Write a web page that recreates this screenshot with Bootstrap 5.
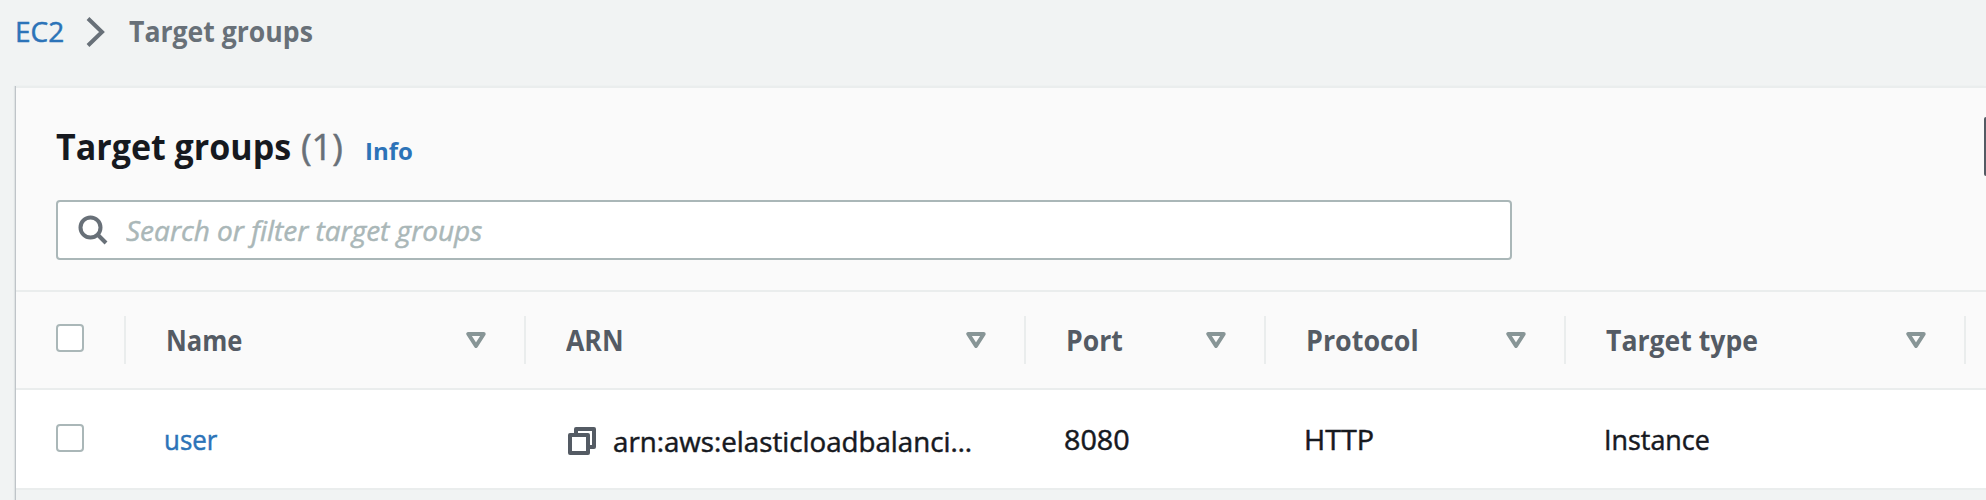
<!DOCTYPE html>
<html lang="en">
<head>
<meta charset="utf-8">
<title>Target groups</title>
<link href="https://cdn.jsdelivr.net/npm/bootstrap@5.3.0/dist/css/bootstrap.min.css" rel="stylesheet">
<style>
html, body { height: 500px; overflow: hidden; }
body { background: #f1f3f3; color: #16191f; font: 400 28px/38px "Open Sans", "Noto Sans", sans-serif; }
a { color: #2c73b8; text-decoration: none; }
svg { display: block; flex: none; }
.crumbs { height: 62px; padding-left: 15px; --bs-breadcrumb-margin-bottom: 0; }
.crumbs .current { color: #687078; font-weight: 700; margin-left: 23px; }
.crumbs .root { width: 49px; }
.crumbs svg { margin: 1px 0 0 22px; }
.panel { margin: 24px 0 0 16px; background: #fafafa; border-top: 2px solid #eaeded; box-shadow: -1px 0 0 #bfc4c8, -2px 0 1px #dfe3e4; }
.panel-head { height: 202px; padding: 29px 0 0 40px; }
.title-line { height: 58px; }
h1 { font-size: 36px; font-weight: 700; line-height: 60px; margin: 0; }
.counter { font-weight: 400; color: #687078; width: 45px; }
.info { font-size: 24px; font-weight: 700; margin-left: 19px; }
.action { width: 2px; height: 59px; margin-left: auto; border: 0; border-left: 2px solid #545b64; border-radius: 2px 0 0 2px; }
.search { width: 1456px; height: 60px; margin-top: 25px; padding-left: 20px; background: #fff; border: 2px solid #aab7b8; border-radius: 4px; }
.search input { width: 1200px; background: none; border: 0; outline: 0; padding: 0; margin-left: 18px; font-style: italic; line-height: 38px; }
.search input::placeholder { color: #aab7b8; opacity: 1; }
.root, .counter, .search input, .line-body { -webkit-text-stroke: .5px; }
.line { display: grid; grid-template-columns: 110px 400px 500px 240px 300px 400px minmax(0, 1fr); align-items: center; border-top: 2px solid #eaeded; }
.line-head { height: 98px; color: #545b64; font-weight: 700; }
.line-body { height: 100px; background: #fff; }
.line-end { border-top: 2px solid #eaeded; background: #f1f3f3; height: 20px; }
.line-head > div { height: 48px; border-right: 2px solid #eaeded; padding: 0 38px 0 40px; }
.line-head span { margin-top: -1px; }
.line-body > div { padding-left: 38px; }
.line > .pick { padding-left: 40px; }
.form-check-input.tick { width: 28px; height: 28px; margin: -4px 0 0; border: 2px solid #aab7b8; border-radius: 4px; background: #fff; }
.line-body .form-check-input.tick { margin-top: -2px; }
.copy { margin: 4px 0 0 4px; }
.arn { margin: 4px 0 0 17px; }
/* condensed letterforms */
.sq { display: inline-block; white-space: nowrap; transform: scaleX(var(--sq, .95)); transform-origin: 0 50%; }
.sq-90 { --sq: .912; } .sq-92 { --sq: .925; } .sq-96 { --sq: .96; } .sq-98 { --sq: .989; } .sq-103 { --sq: 1.025; } .sq-id { --sq: 1; }
.ttl { width: 245px; --sq: .945; }
</style>
</head>
<body>
<nav class="breadcrumb crumbs d-flex align-items-center">
  <a class="root sq sq-id" href="#">EC2</a>
  <svg width="20" height="32" viewBox="0 0 20 32" fill="none" stroke="#687078" stroke-width="4"><path d="M2 2.5 16 16 2 29.5"/></svg>
  <span class="current sq">Target groups</span>
</nav>
<main class="panel">
  <header class="panel-head">
    <div class="title-line d-flex align-items-baseline">
      <h1 class="d-flex"><span class="sq ttl">Target groups</span><span class="counter sq sq-id">(1)</span></h1>
      <a class="info" href="#">Info</a>
      <button class="btn p-0 action align-self-start" aria-label="Actions"></button>
    </div>
    <div class="search d-flex align-items-center">
      <svg width="30" height="30" viewBox="0 0 30 30" fill="none" stroke="#687078" stroke-width="4"><circle cx="12.5" cy="12.5" r="10"/><path d="m19.5 19.5 8.5 8.5"/></svg>
      <input type="text" placeholder="Search or filter target groups">
    </div>
  </header>
  <div class="line line-head">
    <div class="pick d-flex align-items-center"><input class="form-check-input tick" type="checkbox"></div>
    <div class="d-flex align-items-center justify-content-between"><span class="sq sq-90">Name</span><svg width="20" height="16" viewBox="0 0 20 16" fill="none" stroke="#879596" stroke-width="4" stroke-linejoin="round"><path d="M2.3 2h15.4L10 14Z"/></svg></div>
    <div class="d-flex align-items-center justify-content-between"><span class="sq">ARN</span><svg width="20" height="16" viewBox="0 0 20 16" fill="none" stroke="#879596" stroke-width="4" stroke-linejoin="round"><path d="M2.3 2h15.4L10 14Z"/></svg></div>
    <div class="d-flex align-items-center justify-content-between"><span class="sq">Port</span><svg width="20" height="16" viewBox="0 0 20 16" fill="none" stroke="#879596" stroke-width="4" stroke-linejoin="round"><path d="M2.3 2h15.4L10 14Z"/></svg></div>
    <div class="d-flex align-items-center justify-content-between"><span class="sq sq-96">Protocol</span><svg width="20" height="16" viewBox="0 0 20 16" fill="none" stroke="#879596" stroke-width="4" stroke-linejoin="round"><path d="M2.3 2h15.4L10 14Z"/></svg></div>
    <div class="d-flex align-items-center justify-content-between"><span class="sq">Target type</span><svg width="20" height="16" viewBox="0 0 20 16" fill="none" stroke="#879596" stroke-width="4" stroke-linejoin="round"><path d="M2.3 2h15.4L10 14Z"/></svg></div>
  </div>
  <div class="line line-body">
    <div class="pick d-flex align-items-center"><input class="form-check-input tick" type="checkbox"></div>
    <div><a class="sq sq-92" href="#">user</a></div>
    <div class="d-flex align-items-center">
      <svg class="copy" width="28" height="28" viewBox="0 0 28 28" fill="none" stroke="#545b64" stroke-width="4" stroke-linejoin="round"><path d="M2 8h18v18H2ZM8 8V2h18v18h-6"/></svg>
      <span class="arn sq sq-98">arn:aws:elasticloadbalanci…</span>
    </div>
    <div><span class="sq sq-103">8080</span></div>
    <div><span class="sq sq-103">HTTP</span></div>
    <div><span class="sq sq-96">Instance</span></div>
  </div>
  <div class="line-end"></div>
</main>
<script src="https://cdn.jsdelivr.net/npm/bootstrap@5.3.0/dist/js/bootstrap.bundle.min.js"></script>
</body>
</html>
